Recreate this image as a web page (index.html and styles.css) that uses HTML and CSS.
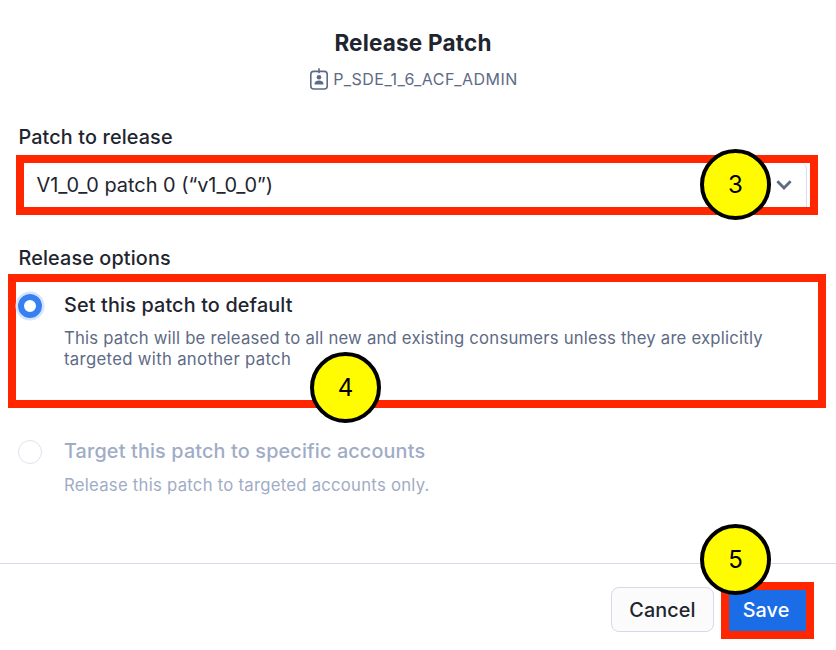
FILE: index.html
```
<!DOCTYPE html>
<html lang="en">
<head>
<meta charset="utf-8">
<title>Release Patch</title>
<link rel="stylesheet" href="styles.css">
</head>
<body>
<main class="dialog">
  <header class="header">
    <h1 class="title">Release Patch</h1>
    <div class="package">
      <svg class="package-icon" width="20" height="24" viewBox="0 0 20 24" fill="none" stroke="#5d6a85" stroke-width="1.6">
        <rect x="1.8" y="4.4" width="16.4" height="17.6" rx="3"/>
        <path d="M10 1.2v5"/>
        <circle cx="10" cy="10.3" r="2.3" fill="#5d6a85" stroke="none"/>
        <path d="M5.6 17.6v-1c0-1.8 2.2-3.1 4.4-3.1s4.4 1.3 4.4 3.1v1z" fill="#5d6a85" stroke="none"/>
      </svg>
      <span class="package-name">P_SDE_1_6_ACF_ADMIN</span>
    </div>
  </header>
  <section class="field">
    <h2 class="label">Patch to release</h2>
    <div class="highlight select-highlight">
      <div class="select">
        <span class="select-value">V1_0_0 patch 0 (“v1_0_0”)</span>
        <svg class="chevron" width="16" height="12" viewBox="0 0 16 12" fill="none" stroke="#5d6a85" stroke-width="2.8"><path d="M1.4 2.3 8 8.9l6.6-6.6"/></svg>
      </div>
      <span class="step step-select">3</span>
    </div>
  </section>
  <section class="options">
    <h2 class="label options-label">Release options</h2>
    <div class="highlight option selected">
      <span class="radio radio-on"></span>
      <div class="option-text">
        <div class="option-title">Set this patch to default</div>
        <p class="description">This patch will be released to all new and existing consumers unless they are explicitly<br><span class="second-line">targeted with another patch</span></p>
      </div>
      <span class="step step-option">4</span>
    </div>
    <div class="option disabled">
      <span class="radio"></span>
      <div class="option-text">
        <div class="option-title">Target this patch to specific accounts</div>
        <p class="description">Release this patch to targeted accounts only.</p>
      </div>
    </div>
  </section>
  <footer class="footer">
    <button class="button cancel">Cancel</button>
    <div class="highlight save-highlight">
      <button class="button save">Save</button>
      <span class="step step-save">5</span>
    </div>
  </footer>
</main>
</body>
</html>
```
FILE: styles.css
```
* { box-sizing: border-box; }
body {
  margin: 0;
  background: #fff;
  color: #1e252f;
  font-family: Inter, "Liberation Sans", sans-serif;
}
.dialog {
  width: 836px;
  height: 650px;
  display: flex;
  flex-direction: column;
  overflow: hidden;
}
.header {
  height: 122px;
  padding: 29px 10px 0 0;
  text-align: center;
  flex: none;
}
.title {
  margin: 0;
  font-size: 22.5px;
  line-height: 28px;
  font-weight: 650;
  letter-spacing: .2px;
}
.package {
  display: flex;
  justify-content: center;
  align-items: center;
  gap: 4px;
  height: 24px;
  margin: 10px -1px 0 0;
  color: #5d6a85;
  font-size: 16px;
  letter-spacing: .46px;
}
.package-name { line-height: 24px; }
.label {
  margin: 0;
  padding: 1px 0 0 18.5px;
  font-size: 19.8px;
  line-height: 28px;
  height: 33px;
  font-weight: 500;
  letter-spacing: .14px;
}
.highlight {
  position: relative;
  border: 8px solid #ff2600;
}
.field { flex: none; }
.select-highlight {
  width: 802px;
  height: 60px;
  margin-left: 16px;
}
.select {
  height: 44px;
  width: 783px;
  display: flex;
  align-items: center;
  justify-content: space-between;
  padding: 0 14px 0 12.5px;
  border-right: 1px solid #d9dce8;
  border-top-right-radius: 6px;
  font-size: 19.9px;
}
.step {
  position: absolute;
  width: 71px;
  height: 71px;
  border: 4px solid #000;
  border-radius: 50%;
  background: #fffb00;
  color: #000;
  font: 24px/63px Inter, "Liberation Sans", sans-serif;
  text-align: center;
}
.step-select { left: 676px; top: -14px; }
.step-option { left: 294px; top: 70px; }
.step-save { left: -29px; top: -66px; }
.options { flex: none; height: 348px; padding-top: 28px; }
.options-label { height: 31px; }
.option { display: flex; gap: 21px; }
.selected {
  width: 818px;
  height: 134px;
  margin-left: 8px;
  padding: 9px 0 0 2px;
}
.disabled {
  padding: 29px 0 0 18px;
  color: #a0acc5;
}
.radio {
  flex: none;
  width: 24px;
  height: 24px;
  margin: 3px 1px 0 0;
  border: 1px solid #dfe2ee;
  border-radius: 50%;
}
.radio-on {
  border: 6px solid #3880f2;
  box-shadow: 0 0 0 2.5px #d5e5ff;
}
.option-title {
  font-size: 19.8px;
  line-height: 28px;
  font-weight: 500;
  letter-spacing: .16px;
}
.description {
  margin: 9px 0 0;
  color: #5d6a85;
  font-size: 16.7px;
  line-height: 21px;
  letter-spacing: .21px;
}
.second-line { letter-spacing: .33px; }
.disabled .description {
  color: #a0acc5;
  margin-top: 10px;
  letter-spacing: .26px;
}
.footer {
  height: 87px;
  flex: none;
  display: flex;
  justify-content: flex-end;
  align-items: flex-start;
  gap: 7px;
  padding: 18px 22px 0 0;
  border-top: 1px solid #dadbe9;
}
.button {
  font: 500 19.8px/24px Inter, "Liberation Sans", sans-serif;
  letter-spacing: .1px;
  padding: 0;
}
.cancel {
  width: 103px;
  height: 45px;
  margin-top: 5px;
  border: 1px solid #d5d9e8;
  border-radius: 8px;
  background: #fbfbfb;
  color: #1e252f;
}
.save-highlight { width: 93px; height: 57px; }
.save {
  display: block;
  width: 77px;
  height: 41px;
  padding: 0 3px 1px 0;
  border: 0;
  background: #1a6ce7;
  color: #fff;
}
```
